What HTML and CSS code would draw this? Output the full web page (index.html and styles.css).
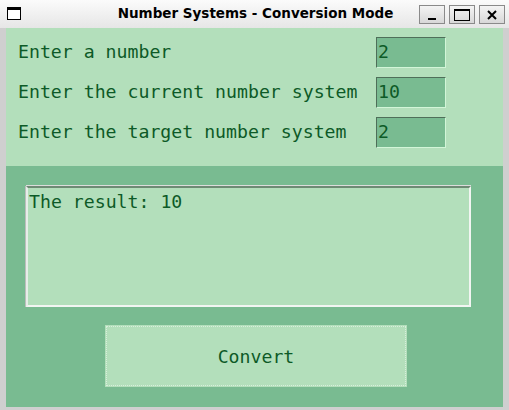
FILE: index.html
```html
<!DOCTYPE html>
<html>
<head>
<meta charset="utf-8">
<link rel="stylesheet" href="styles.css">
</head>
<body>
<div class="window">
  <div class="titlebar">
    <div class="appicon"></div>
    <div class="title">Number Systems - Conversion Mode</div>
    <div class="wbtns">
      <div class="wbtn"><span class="min"></span></div>
      <div class="wbtn"><span class="max"></span></div>
      <div class="wbtn"><svg width="12" height="12" viewBox="0 0 12 12"><path d="M2 2 L10 10 M10 2 L2 10" stroke="#000" stroke-width="2"/></svg></div>
    </div>
  </div>
  <div class="frame">
    <div class="inputs">
      <div class="row"><span class="label">Enter a number</span><div class="entry">2</div></div>
      <div class="row"><span class="label">Enter the current number system</span><div class="entry">10</div></div>
      <div class="row"><span class="label">Enter the target number system</span><div class="entry">2</div></div>
    </div>
    <div class="output">
      <div class="result">The result: 10</div>
      <div class="btnwrap"><div class="convert">Convert</div></div>
    </div>
  </div>
</div>
</body>
</html>
```
FILE: styles.css
```css
html, body { margin: 0; padding: 0; }
body { width: 509px; height: 410px; overflow: hidden; background: #cfcfcf; }
.window { width: 509px; height: 410px; display: flex; flex-direction: column; }
.titlebar {
  height: 28px; flex: none; position: relative;
  background: linear-gradient(#fbfbfb, #e6e6e6);
  display: flex; align-items: center;
}
.appicon {
  position: absolute; left: 7px; top: 7px; width: 12px; height: 9px;
  border: 1px solid #000; border-top-width: 3px; background: #fff;
}
.title {
  width: 100%; text-align: center; font-family: "DejaVu Sans", sans-serif;
  font-weight: bold; font-size: 13.5px; color: #000; padding-left: 2px; margin-top: -2px;
}
.wbtns { position: absolute; right: 4px; top: 5px; display: flex; gap: 4px; }
.wbtn {
  width: 24px; height: 17px; border: 1px solid #8a8a8a;
  background: linear-gradient(#f4f4f4, #d8d8d8);
  display: flex; align-items: center; justify-content: center; box-sizing: content-box;
}
.min { width: 8px; height: 2px; background: #000; margin-top: 8px; }
.max { width: 14px; height: 9px; border: 1px solid #000; border-top-width: 2px; }
.frame {
  flex: 1; margin: 0 6px 3px 6px; display: flex; flex-direction: column;
  font-family: "DejaVu Sans Mono", monospace; font-size: 18.2px; color: #0d5a27;
}
.inputs { background: #b3dfbb; padding: 9px 0 19px 12px; display: flex; flex-direction: column; gap: 10px; }
.row { display: flex; align-items: center; height: 30px; }
.label { width: 358px; margin-top: -2px; }
.entry {
  width: 70px; height: 31px; box-sizing: border-box; background: #79bb91;
  border-top: 1px solid #4f6f59; border-left: 1px solid #4f6f59;
  border-right: 1px solid #d2f5d8; border-bottom: 1px solid #d2f5d8;
  padding-left: 1px; line-height: 28px;
}
.output { flex: 1; background: #79bb91; padding: 20px 32px 0 20px; display: flex; flex-direction: column; }
.result {
  height: 121px; box-sizing: border-box; background: #b3dfbb;
  border-top: 2px solid #6e8a74; border-left: 2px solid #e6eee8;
  border-right: 2px solid #f2f5f2; border-bottom: 2px solid #f2f5f2;
  box-shadow: 0 -1px 0 #dcdcdc, -1px 0 0 #bdbdbd;
  padding: 2px 0 0 1px; line-height: 23px;
}
.btnwrap { display: flex; padding: 19px 0 0 80px; }
.convert {
  width: 300px; height: 60px; box-sizing: border-box; background: #b3dfbb;
  border: 1px dotted #d8efdc; outline: 1px solid #b3dfbb;
  display: flex; align-items: center; justify-content: center;
}
```
